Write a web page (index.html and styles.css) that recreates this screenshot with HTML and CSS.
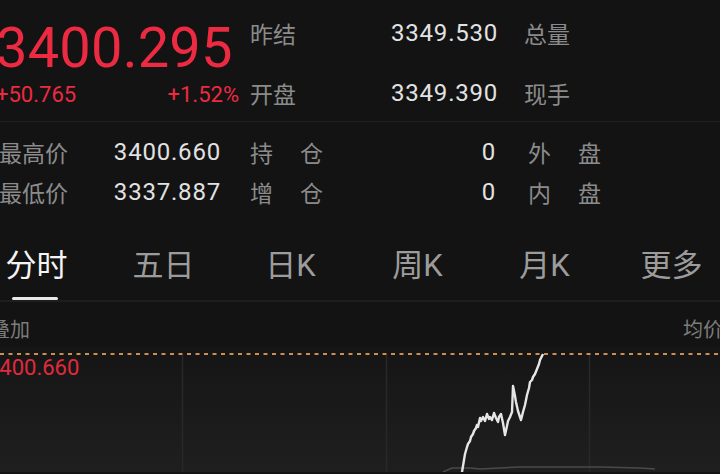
FILE: index.html
```html
<!DOCTYPE html>
<html lang="zh-CN">
<head>
<meta charset="utf-8">
<link rel="stylesheet" href="styles.css">
</head>
<body>
<div class="page">
  <section class="quote">
    <div class="price-block">
      <div class="last">3400.295</div>
      <div class="change">
        <span>+50.765</span>
        <span>+1.52%</span>
      </div>
    </div>
    <div class="quote-grid">
      <span class="lbl">昨结</span><span class="val">3349.530</span><span class="lbl lbl-r">总量</span>
      <span class="lbl">开盘</span><span class="val">3349.390</span><span class="lbl lbl-r">现手</span>
    </div>
  </section>
  <section class="stats">
    <span class="lbl">最高价</span><span class="val">3400.660</span><span class="lbl wide">持仓</span><span class="val">0</span><span class="lbl wide lbl-r">外盘</span>
    <span class="lbl">最低价</span><span class="val">3337.887</span><span class="lbl wide">增仓</span><span class="val">0</span><span class="lbl wide lbl-r">内盘</span>
  </section>
  <nav class="tabs">
    <span class="tab active">分时</span>
    <span class="tab">五日</span>
    <span class="tab">日K</span>
    <span class="tab">周K</span>
    <span class="tab">月K</span>
    <span class="tab">更多</span>
  </nav>
  <section class="chart">
    <div class="chart-head">
      <span>叠加</span>
      <span>均价</span>
    </div>
    <div class="plot">
      <svg class="plot-svg" width="720" height="126" viewBox="0 348 720 126">
        <defs>
          <linearGradient id="bg" x1="0" y1="0" x2="0" y2="1">
            <stop offset="0" stop-color="#151515"/>
            <stop offset="1" stop-color="#1f1f1f"/>
          </linearGradient>
        </defs>
        <rect x="0" y="348" width="720" height="126" fill="url(#bg)"/>
        <line x1="182.5" y1="357" x2="182.5" y2="474" stroke="#282828" stroke-width="1.5"/>
        <line x1="386.5" y1="357" x2="386.5" y2="474" stroke="#282828" stroke-width="1.5"/>
        <line x1="589.5" y1="357" x2="589.5" y2="474" stroke="#282828" stroke-width="1.5"/>
        <line x1="0" y1="356" x2="720" y2="356" stroke="#c98f55" stroke-width="2.2" stroke-dasharray="4 4.5"/>
        <polyline fill="none" stroke="#4a4a4a" stroke-width="1.5" points="443,474 452,470 470,470 480,471 500,470 520,469 560,469 600,469 640,470 655,471"/>
        <polyline fill="none" stroke="#e6e6e6" stroke-width="2.4" stroke-linejoin="round" points="462,474 464,462 465,456 467,449 468,446 470,443 471,439 473,436 474,433 476,430 477,427 478,429 480,420 481,423 483,419 485,423 487,416 489,421 490,419 492,422 494,415 496,420 498,424 499,419 501,416 503,425 505,437 507,428 508,423 510,419 512,414 513,388 515,398 516,404 518,413 520,419 521,422 523,414 525,407 527,397 529,390 530,384 532,382 533,379 535,376 537,371 539,366 540,362 542,358 543,356"/>
      </svg>
      <span class="hi-tag">3400.660</span>
    </div>
  </section>
</div>
</body>
</html>
```

FILE: styles.css
```css
* { box-sizing: border-box; margin: 0; padding: 0; }

html, body {
  width: 720px;
  height: 474px;
  overflow: hidden;
  background: #131313;
}

body {
  font-family: Roboto, "Noto Sans CJK SC", sans-serif;
  color: #dedede;
}

.page {
  width: 720px;
  height: 474px;
  overflow: hidden;
  position: relative;
}

/* ---------- top quote ---------- */
.quote {
  display: flex;
  height: 122px;
  border-bottom: 1px solid #1f1f1f;
}

.price-block {
  width: 245px;
  margin-left: -4px;
  padding-top: 19px;
  color: #ec2a41;
}

.last {
  font-size: 56px;
  line-height: 58px;
  letter-spacing: 0.2px;
}

.change {
  display: flex;
  justify-content: space-between;
  font-size: 22px;
  line-height: 28px;
  margin-top: 4px;
  padding-right: 2px;
}

.quote-grid {
  display: grid;
  grid-template-columns: 141px 96px auto;
  grid-auto-rows: 60px;
  padding-top: 3px;
  padding-left: 9px;
  align-items: center;
}

.quote-grid .lbl-r {
  padding-left: 37px;
}

.lbl {
  font-size: 23px;
  color: #8b8b8b;
}

.val {
  font-size: 24px;
  text-align: right;
  color: #e2e2e2;
  letter-spacing: 0.8px;
}

.lbl-r {
  padding-left: 32px;
}

/* ---------- stats ---------- */
.stats {
  display: grid;
  grid-template-columns: 111px 111px 179px 96px auto;
  grid-auto-rows: 40px;
  align-items: center;
  margin-left: -1px;
  padding-top: 10px;
}

.stats .wide {
  letter-spacing: 27px;
  white-space: nowrap;
}

.stats .wide:not(.lbl-r) {
  padding-left: 29px;
}

/* ---------- tabs ---------- */
.tabs {
  display: grid;
  grid-template-columns: repeat(6, 127px);
  margin-left: -27px;
  margin-top: 20px;
  height: 70px;
  border-bottom: 2px solid #1e1e1e;
  width: 747px;
}

.tab {
  position: relative;
  text-align: center;
  font-size: 31px;
  line-height: 68px;
  color: #9c9c9c;
}

.tab.active {
  color: #f4f4f4;
}

.tab.active::after {
  content: "";
  position: absolute;
  left: 39px;
  width: 46px;
  bottom: 0;
  height: 3px;
  border-radius: 2px;
  background: #e8e8e8;
}

/* ---------- chart ---------- */
.chart {
  display: flex;
  flex-direction: column;
}

.chart-head {
  display: flex;
  justify-content: space-between;
  height: 44px;
  padding-top: 16px;
  font-size: 20px;
  line-height: 24px;
  color: #7c7c7c;
  margin-left: -10px;
  margin-right: -3px;
}

.plot {
  position: relative;
  height: 126px;
}

.plot-svg {
  display: block;
}

.hi-tag {
  position: absolute;
  left: -13px;
  top: 11px;
  font-size: 22px;
  line-height: 22px;
  color: #e02a3e;
}
```
